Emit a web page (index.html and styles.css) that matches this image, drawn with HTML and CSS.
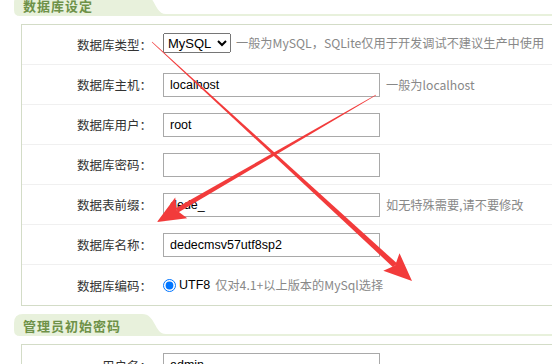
FILE: index.html
```html
<!DOCTYPE html>
<html lang="zh-CN">
<head>
  <meta charset="UTF-8">
  <title>数据库设定</title>
  <link rel="stylesheet" href="styles.css">
</head>
<body>
  <div class="page">
    <div class="section-head">
      <div class="tab">数据库设定</div>
      <div class="line"></div>
    </div>
    <div class="panel">
      <div class="row">
        <div class="label">数据库类型：</div>
        <div class="value">
          <select class="db-type">
            <option>MySQL</option>
            <option>SQLite</option>
          </select>
          <span class="hint hint-near">一般为MySQL，SQLite仅用于开发调试不建议生产中使用</span>
        </div>
      </div>
      <div class="row">
        <div class="label">数据库主机：</div>
        <div class="value">
          <input class="field" type="text" value="localhost">
          <span class="hint">一般为localhost</span>
        </div>
      </div>
      <div class="row">
        <div class="label">数据库用户：</div>
        <div class="value"><input class="field" type="text" value="root"></div>
      </div>
      <div class="row">
        <div class="label">数据库密码：</div>
        <div class="value"><input class="field" type="text" value=""></div>
      </div>
      <div class="row">
        <div class="label">数据表前缀：</div>
        <div class="value">
          <input class="field" type="text" value="dede_">
          <span class="hint">如无特殊需要,请不要修改</span>
        </div>
      </div>
      <div class="row">
        <div class="label">数据库名称：</div>
        <div class="value"><input class="field" type="text" value="dedecmsv57utf8sp2"></div>
      </div>
      <div class="row">
        <div class="label">数据库编码：</div>
        <div class="value">
          <label class="radio"><input type="radio" name="charset" checked> UTF8</label>
          <span class="hint hint-radio">仅对4.1+以上版本的MySql选择</span>
        </div>
      </div>
    </div>

    <div class="section-head">
      <div class="tab">管理员初始密码</div>
      <div class="line"></div>
    </div>
    <div class="panel">
      <div class="row">
        <div class="label">用户名：</div>
        <div class="value"><input class="field" type="text" value="admin"></div>
      </div>
    </div>
  </div>

  <!-- annotation arrows drawn over the form -->
  <svg class="marks" width="552" height="364" viewBox="0 0 552 364">
    <g fill="#f23b3b">
      <polygon points="151.8,42.2 152.2,41.8 397.2,263.6 393.0,267.2"/>
      <polygon points="412,281 383.3,270.8 395.1,265.4 399.5,253.2"/>
      <polygon points="375.85,94.74 376.15,95.26 178.2,212.6 175.6,208.2"/>
      <polygon points="157,222 175.2,197.5 176.9,210.4 187.2,218.3"/>
    </g>
  </svg>
</body>
</html>
```

FILE: styles.css
```css
html, body {
  margin: 0;
  overflow: hidden;
  background: #ffffff;
}
body {
  font-family: "Noto Sans CJK SC", "Microsoft YaHei", sans-serif;
  font-size: 12.5px;
  color: #333;
}
.page {
  margin-top: -6px;
  padding-left: 14px;
  width: 620px;
}
.section-head {
  display: flex;
  align-items: flex-end;
  height: 22px;
}
.section-head + .panel {
  margin-top: 8px;
}
.panel + .section-head {
  margin-top: 8px;
}
.tab {
  width: 152px;
  height: 22px;
  box-sizing: border-box;
  padding: 3px 0 0 9px;
  line-height: 18px;
  background: #e8f1dc;
  color: #6e9148;
  font-size: 13px;
  font-weight: bold;
  letter-spacing: 1px;
  clip-path: path('M0,9 Q0,0 9,0 H128 C142,0 140,20 152,20 V22 H6 Q0,22 0,16 Z');
}
.line {
  flex: 1;
  height: 2px;
  background: #e8f1dc;
}
.panel {
  margin-left: 7px;
  border: 1px solid #d3dcc7;
}
.row {
  display: flex;
  align-items: center;
  height: 39px;
  border-bottom: 1px solid #f0f0f0;
}
.row:last-child {
  height: 40px;
  border-bottom: none;
}
.label {
  width: 130px;
  text-align: right;
  color: #333;
}
.value {
  display: flex;
  align-items: center;
  margin-left: 11px;
}
.field {
  width: 217px;
  height: 24px;
  box-sizing: border-box;
  margin: 0;
  padding: 0 6px;
  border: 1px solid #a9a9a9;
  font-family: "Liberation Sans", Arial, sans-serif;
  font-size: 12.5px;
  color: #000;
  outline: none;
}
.db-type {
  width: 68px;
  height: 20px;
  margin: -3px 0 0 0;
  font-family: "Liberation Sans", Arial, sans-serif;
  font-size: 13px;
  color: #000;
}
.hint {
  margin-left: 6px;
  color: #888;
  font-size: 12.2px;
}
.hint-near {
  margin-left: 5px;
  margin-top: -3px;
}
.hint-radio {
  margin-left: 5px;
}
.radio {
  display: flex;
  align-items: center;
  color: #000;
  font-family: "Liberation Sans", Arial, sans-serif;
  font-size: 12.5px;
}
.radio input {
  margin: 0 3px 0 0;
  width: 13px;
  height: 13px;
}
.marks {
  position: absolute;
  top: 0;
  left: 0;
  pointer-events: none;
}
```
